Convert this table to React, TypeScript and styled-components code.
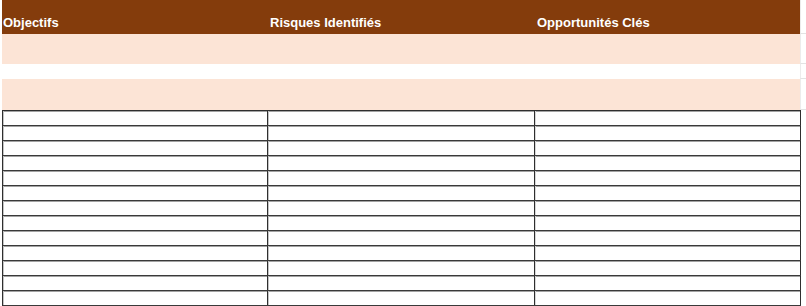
import styled, { createGlobalStyle } from 'styled-components'

const GlobalStyle = createGlobalStyle`
  html, body {
    margin: 0;
    padding: 0;
    background: #ffffff;
  }
  body {
    font-family: "Liberation Sans", Arial, sans-serif;
  }
`

const columns = ['Objectifs', 'Risques Identifiés', 'Opportunités Clés']
const widths = [265, 267, 266]
const tableRows = Array.from({ length: 13 }, (_, i) => i)

const App = () => {
  return (
    <Sheet>
      <GlobalStyle />
      <Line>
        <HeaderBand>
          {columns.map((title, i) => (
            <HeaderCell key={title} $width={widths[i]} $first={i === 0}>{title}</HeaderCell>
          ))}
        </HeaderBand>
        <Gutter />
      </Line>
      <Line>
        <Band $height={30} $tint />
        <Gutter />
      </Line>
      <Line>
        <Band $height={15} />
        <Gutter />
      </Line>
      <Line>
        <Band $height={31} $tint />
        <Gutter />
      </Line>
      <Table>
        {tableRows.map((r) => (
          <TableRow key={r}>
            {widths.map((w, i) => (
              <TableCell key={i} $width={w} $last={i === widths.length - 1} />
            ))}
          </TableRow>
        ))}
      </Table>
    </Sheet>
  )
}

export default App

const Sheet = styled.div`
  width: 806px;
  height: 306px;
  overflow: hidden;
  padding-left: 2px;
  box-sizing: border-box;
  display: flex;
  flex-direction: column;
`

const Line = styled.div`
  display: flex;
`

const HeaderBand = styled.div`
  width: 798px;
  height: 34px;
  background: #843c0c;
  display: flex;
  align-items: flex-end;
  padding-bottom: 4px;
  box-sizing: border-box;
`

const HeaderCell = styled.div<{ $width: number; $first: boolean }>`
  width: ${(p) => p.$width}px;
  padding-left: ${(p) => (p.$first ? 1 : 3)}px;
  box-sizing: border-box;
  color: #ffffff;
  font-weight: 700;
  font-size: 13px;
  line-height: 15px;
  white-space: nowrap;
`

const Band = styled.div<{ $height: number; $tint?: boolean }>`
  width: 798px;
  height: ${(p) => p.$height}px;
  background: ${(p) => (p.$tint ? '#fce4d6' : '#ffffff')};
`

const Gutter = styled.div`
  flex: 1;
  border-bottom: 1px solid #e3e3e3;
  border-left: 1px solid #ececec;
`

const Table = styled.div`
  width: 799px;
  border-top: 1px solid #2f2f2f;
  border-left: 1px solid #2f2f2f;
  box-sizing: border-box;
  display: flex;
  flex-direction: column;
`

const TableRow = styled.div`
  display: flex;
  height: 15px;
  box-sizing: border-box;
  flex-shrink: 0;
  border-bottom: 1px solid #3a3a3a;
  box-shadow: inset 0 1px 0 #a3a3a3;
`

const TableCell = styled.div<{ $width: number; $last: boolean }>`
  width: ${(p) => p.$width}px;
  box-sizing: border-box;
  border-right: 1px solid #2f2f2f;
  box-shadow: inset 1px 0 0 ${(p) => (p.$last ? '#d8d8d8' : '#c4c4c4')};
`
